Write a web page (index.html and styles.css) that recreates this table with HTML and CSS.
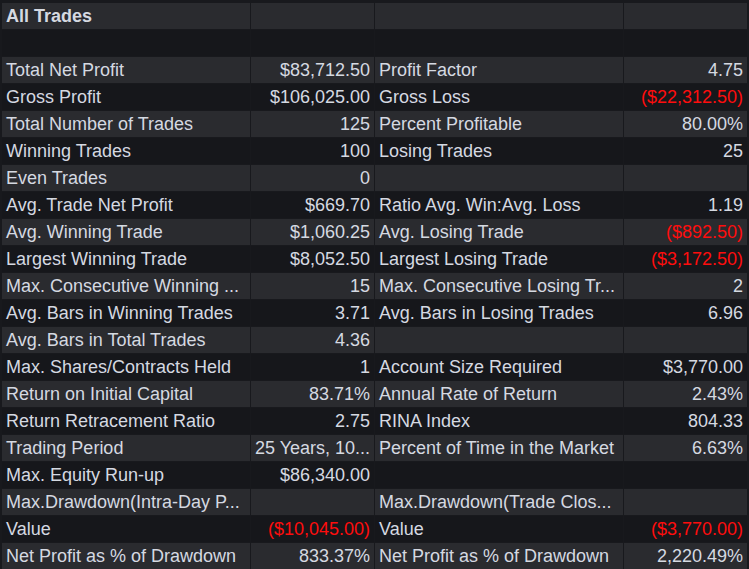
FILE: index.html
```html
<!DOCTYPE html>
<html>
<head>
<meta charset="utf-8">
<link rel="stylesheet" href="styles.css">
</head>
<body>
<div class="report">
  <div class="row light head"><div class="c">All Trades</div><div class="c"></div><div class="c"></div><div class="c"></div></div>
  <div class="row dark"><div class="c"></div><div class="c"></div><div class="c"></div><div class="c"></div></div>
  <div class="row light"><div class="c">Total Net Profit</div><div class="c num">$83,712.50</div><div class="c">Profit Factor</div><div class="c num">4.75</div></div>
  <div class="row dark"><div class="c">Gross Profit</div><div class="c num">$106,025.00</div><div class="c">Gross Loss</div><div class="c num neg">($22,312.50)</div></div>
  <div class="row light"><div class="c">Total Number of Trades</div><div class="c num">125</div><div class="c">Percent Profitable</div><div class="c num">80.00%</div></div>
  <div class="row dark"><div class="c">Winning Trades</div><div class="c num">100</div><div class="c">Losing Trades</div><div class="c num">25</div></div>
  <div class="row light"><div class="c">Even Trades</div><div class="c num">0</div><div class="c"></div><div class="c"></div></div>
  <div class="row dark"><div class="c">Avg. Trade Net Profit</div><div class="c num">$669.70</div><div class="c">Ratio Avg. Win:Avg. Loss</div><div class="c num">1.19</div></div>
  <div class="row light"><div class="c">Avg. Winning Trade</div><div class="c num">$1,060.25</div><div class="c">Avg. Losing Trade</div><div class="c num neg">($892.50)</div></div>
  <div class="row dark"><div class="c">Largest Winning Trade</div><div class="c num">$8,052.50</div><div class="c">Largest Losing Trade</div><div class="c num neg">($3,172.50)</div></div>
  <div class="row light"><div class="c">Max. Consecutive Winning ...</div><div class="c num">15</div><div class="c">Max. Consecutive Losing Tr...</div><div class="c num">2</div></div>
  <div class="row dark"><div class="c">Avg. Bars in Winning Trades</div><div class="c num">3.71</div><div class="c">Avg. Bars in Losing Trades</div><div class="c num">6.96</div></div>
  <div class="row light"><div class="c">Avg. Bars in Total Trades</div><div class="c num">4.36</div><div class="c"></div><div class="c"></div></div>
  <div class="row dark"><div class="c">Max. Shares/Contracts Held</div><div class="c num">1</div><div class="c">Account Size Required</div><div class="c num">$3,770.00</div></div>
  <div class="row light"><div class="c">Return on Initial Capital</div><div class="c num">83.71%</div><div class="c">Annual Rate of Return</div><div class="c num">2.43%</div></div>
  <div class="row dark"><div class="c">Return Retracement Ratio</div><div class="c num">2.75</div><div class="c">RINA Index</div><div class="c num">804.33</div></div>
  <div class="row light"><div class="c">Trading Period</div><div class="c num">25 Years, 10...</div><div class="c">Percent of Time in the Market</div><div class="c num">6.63%</div></div>
  <div class="row dark"><div class="c">Max. Equity Run-up</div><div class="c num">$86,340.00</div><div class="c"></div><div class="c"></div></div>
  <div class="row light"><div class="c">Max.Drawdown(Intra-Day P...</div><div class="c"></div><div class="c">Max.Drawdown(Trade Clos...</div><div class="c"></div></div>
  <div class="row dark"><div class="c">Value</div><div class="c num neg">($10,045.00)</div><div class="c">Value</div><div class="c num neg">($3,770.00)</div></div>
  <div class="row light"><div class="c">Net Profit as % of Drawdown</div><div class="c num">833.37%</div><div class="c">Net Profit as % of Drawdown</div><div class="c num">2,220.49%</div></div>
</div>
</body>
</html>
```
FILE: styles.css
```css
html, body {
  margin: 0;
  padding: 0;
  background: #18191d;
}
body {
  font-family: "Liberation Sans", Arial, sans-serif;
  font-size: 18px;
  color: #d5d9e1;
}
.report {
  display: flex;
  flex-direction: column;
  gap: 1px;
  padding: 3px 2px 0 2px;
}
.row {
  display: grid;
  grid-template-columns: 248px 123px 248px 123px;
  column-gap: 1px;
  height: 26px;
}
.c {
  height: 26px;
  line-height: 26px;
  padding: 0 4px 0 4px;
  white-space: nowrap;
  overflow: hidden;
}
.light .c { background: #2a2b2f; }
.dark .c { background: #16171b; }
.head .c { font-weight: bold; }
.num { text-align: right; }
.neg { color: #ff0d0d; }
```
